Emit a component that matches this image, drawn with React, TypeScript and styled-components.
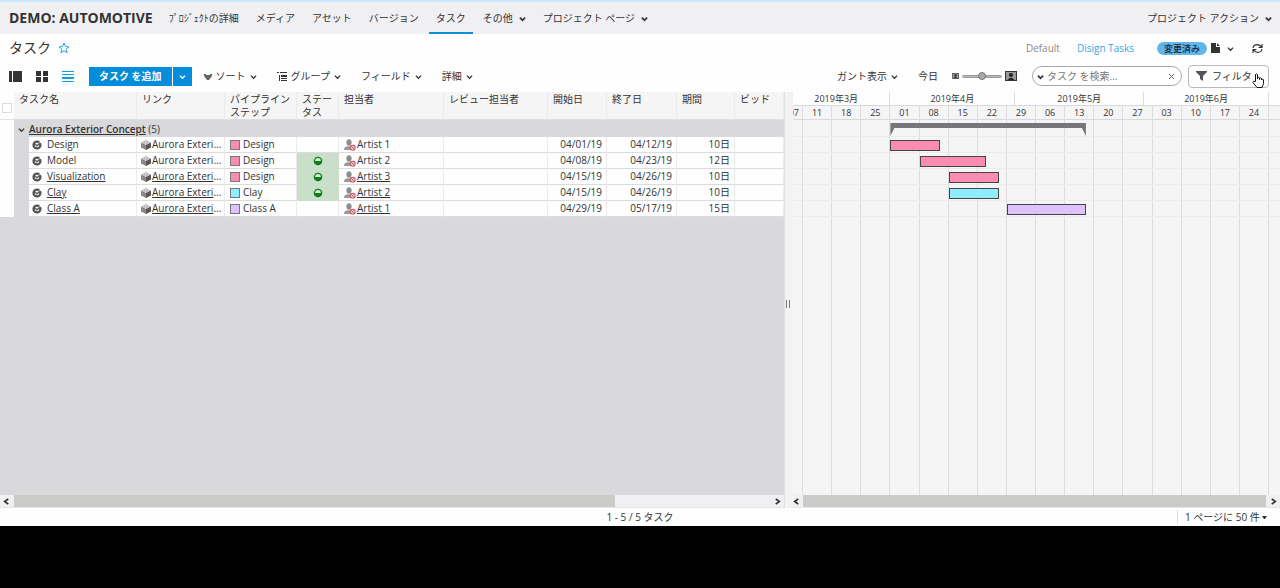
import React from "react";
import styled, { createGlobalStyle } from "styled-components";

const GlobalStyle = createGlobalStyle`
  *, *::before, *::after { box-sizing: border-box; }
  body {
    margin: 0;
    background: #000;
    color: #333;
    font: 10px/14px "Open Sans", "Noto Sans CJK JP", sans-serif;
  }
  button, input, select { font: inherit; color: inherit; }
  button { border: 0; padding: 0; background: none; cursor: pointer; white-space: nowrap; }
  a { color: inherit; text-decoration: none; }
`;

const Page = styled.div`
  display: flex;
  flex-direction: column;
  min-height: calc(100vh - 62px);
  background: #fefefe;
`;

const TopBar = styled.header`
  display: flex;
  align-items: center;
  height: 34px;
  padding: 0 8px 0 9px;
  border-top: 2px solid #c6e9fb;
  background: #f0f0f3;
`;

const ProjectName = styled.div`
  margin-right: 16px;
  font-size: 14px;
  font-weight: 700;
  white-space: nowrap;
`;

const Nav = styled.nav`
  display: flex;
  align-self: stretch;
  flex: 1;
  gap: 3px;
`;

const NavLink = styled.a<{ $active?: boolean }>`
  display: flex;
  align-items: center;
  gap: 6px;
  padding: 2px 7px 0;
  white-space: nowrap;
  border-bottom: 2px solid ${(p) => (p.$active ? "#0e8fd6" : "transparent")};
  &:first-child { padding-left: 0; }
`;

const TextButton = styled.button<{ $gap?: number }>`
  display: inline-flex;
  align-items: center;
  gap: ${(p) => p.$gap ?? 4}px;
`;

const TitleBar = styled.div`
  display: flex;
  align-items: center;
  height: 28px;
  padding: 0 17px 0 9px;
`;

const Title = styled.h1`
  margin: 0 6px 0 0;
  font-size: 14px;
  line-height: 20px;
  font-weight: 400;
`;

const Push = styled.div`
  flex: 1;
`;

const ViewLink = styled.a<{ $active?: boolean }>`
  margin-right: ${(p) => (p.$active ? 23 : 17)}px;
  color: ${(p) => (p.$active ? "#35a7df" : "#8a8a8a")};
`;

const Badge = styled.span`
  margin-right: 4px;
  padding: 0 7px;
  border-radius: 7px;
  background: #60b6e8;
  color: #1b2b38;
  font-weight: 500;
  font-size: 9px;
  line-height: 13px;
`;

const PageMenu = styled(TextButton)`
  margin-right: 18px;
`;

const Toolbar = styled.div`
  display: flex;
  align-items: center;
  height: 30px;
  padding: 0 11px 2px 9px;
`;

const ViewModes = styled.div`
  display: flex;
  gap: 14px;
  margin-right: 15px;
  button { display: flex; }
`;

const SplitButton = styled.div`
  display: flex;
  gap: 1px;
  margin-right: 12px;
`;

const Primary = styled.button`
  display: flex;
  align-items: center;
  justify-content: center;
  height: 19px;
  padding: 0 10px;
  background: #058cdb;
  color: #fff;
  font-weight: 700;
  &:last-child { padding: 0 6px; }
`;

const Menus = styled.div`
  display: flex;
  gap: 20px;
`;

const ToolbarEnd = styled.div`
  display: flex;
  align-items: center;
  margin-left: auto;
  gap: 6px;
`;

const GanttTools = styled.div`
  display: flex;
  align-items: center;
  gap: 20px;
  margin-right: 9px;
`;

const Zoom = styled.label`
  display: flex;
  align-items: center;
  gap: 3px;
  margin-left: -6px;
`;

const Range = styled.input`
  appearance: none;
  width: 40px;
  height: 10px;
  margin: 0;
  background: transparent;
  &::-webkit-slider-runnable-track {
    height: 3px;
    border: 1px solid #999;
    border-radius: 2px;
    background: #bbb;
  }
  &::-webkit-slider-thumb {
    appearance: none;
    width: 8px;
    height: 8px;
    margin-top: -4px;
    border: 1px solid #777;
    border-radius: 50%;
    background: #a9a9a9;
  }
`;

const Search = styled.div`
  display: flex;
  align-items: center;
  gap: 3px;
  width: 150px;
  height: 20px;
  padding: 0 7px 0 4px;
  border: 1px solid #a9a9a9;
  border-radius: 10px;
  background: #fff;
  input {
    flex: 1;
    min-width: 0;
    padding: 0;
    border: 0;
    outline: 0;
    background: none;
  }
  input::placeholder { color: #777; }
  button { display: flex; }
`;

const FilterButton = styled.button`
  position: relative;
  display: flex;
  align-items: center;
  gap: 5px;
  width: 81px;
  height: 23px;
  padding: 0 7px;
  border: 1px solid #b9b9b9;
  border-radius: 4px;
`;

const Pointer = styled.svg`
  position: absolute;
  left: 63px;
  top: 7px;
`;

const Workspace = styled.main`
  display: grid;
  grid-template-columns: minmax(0, 784fr) 9px minmax(0, 487fr);
  flex: 1;
`;

const Pane = styled.section<{ $bg: string }>`
  display: flex;
  flex-direction: column;
  overflow: hidden;
  background: ${(p) => p.$bg};
`;

const Splitter = styled.div`
  display: flex;
  align-items: center;
  justify-content: center;
  padding: 8px 2px 0 0;
  background: #f3f3f4;
  border-left: 1px solid #e0e0e2;
  &::before {
    content: "";
    width: 4px;
    height: 8px;
    border: 1px solid #777;
    border-width: 0 1px;
  }
`;

const TaskTable = styled.table`
  width: 100%;
  table-layout: fixed;
  border-spacing: 0;
`;

const HeadCell = styled.th`
  height: 28px;
  padding: 1px 0 0 5px;
  border-right: 1px solid #ebebee;
  border-bottom: 1px solid #dededf;
  background: #f5f5f5;
  line-height: 13px;
  font-weight: 400;
  text-align: left;
  vertical-align: top;
  overflow: hidden;
`;

const CheckCell = styled.td`
  padding: 4px 0 0 2px;
  background: #fefefe;
  border-bottom: 1px solid #e2e2e2;
`;

const CheckBox = styled.input`
  appearance: none;
  display: block;
  width: 10px;
  height: 10px;
  margin: 0;
  border: 1px solid #dcdcdc;
  background: #fff;
`;

const Gutter = styled.td<{ $blank?: boolean }>`
  padding: 0;
  background: ${(p) => (p.$blank ? "#fefefe" : "#d9d9db")};
`;

const GroupCell = styled.td`
  height: 17px;
  padding: 0 0 0 4px;
  background: #d9d9db;
  line-height: 16px;
  button { margin-right: 4px; }
  a { font-weight: 600; text-decoration: underline; }
`;

const Cell = styled.td<{ $right?: boolean; $tint?: boolean }>`
  height: 16px;
  padding: 0 4px 0 5px;
  background: ${(p) => (p.$tint ? "#c9dfca" : "#fefefe")};
  border-right: 1px solid ${(p) => (p.$tint ? "#c9dfca" : "#ececee")};
  border-bottom: 1px solid ${(p) => (p.$tint ? "#c9dfca" : "#dcdcdd")};
  line-height: 15px;
  text-align: ${(p) => (p.$right ? "right" : "left")};
  white-space: nowrap;
`;

const NameCell = styled(Cell)`
  padding-left: 3px;
`;

const LinkCell = styled(Cell)`
  padding: 0 2px 0 4px;
`;

const CellLine = styled.div<{ $gap?: number; $center?: boolean }>`
  display: flex;
  align-items: center;
  justify-content: ${(p) => (p.$center ? "center" : "flex-start")};
  gap: ${(p) => p.$gap ?? 1}px;
  height: 15px;
  svg { flex: none; }
`;

const ItemLink = styled.a<{ $underline?: boolean }>`
  text-decoration: ${(p) => (p.$underline ? "underline" : "none")};
`;

const Swatch = styled.span<{ $color: string }>`
  width: 10px;
  height: 10px;
  border: 1px solid #777;
  background: ${(p) => p.$color};
`;

const ScrollBar = styled.div<{ $arrow: number }>`
  display: flex;
  align-items: stretch;
  height: 13px;
  margin-top: auto;
  background: #f0f0f3;
  border-bottom: 1px solid #e6e6e9;
  button {
    display: flex;
    flex: none;
    align-items: center;
    justify-content: center;
    width: 14px;
  }
  button:first-child {
    justify-content: flex-start;
    width: ${(p) => p.$arrow}px;
    padding-left: ${(p) => (p.$arrow > 10 ? 3 : 0)}px;
  }
`;

const Track = styled.div<{ $size: number }>`
  flex: 1;
  &::before {
    content: "";
    display: block;
    width: ${(p) => p.$size}%;
    height: 100%;
    background: #cbcbca;
  }
`;

const Timeline = styled.div`
  position: relative;
  display: flex;
  flex: 1;
  flex-direction: column;
`;

const DAY_COLUMNS = "10px repeat(112, minmax(0, 1fr)) 11px";

const MonthRow = styled.div`
  display: grid;
  grid-template-columns: ${DAY_COLUMNS};
  height: 14px;
  border-bottom: 1px solid #d9d9dc;
  background: #fefefe;
`;

const Month = styled.div<{ $from: number; $to: number }>`
  grid-column: ${(p) => p.$from} / ${(p) => p.$to};
  overflow: hidden;
  border-right: 1px solid #dcdce0;
  font-size: 9px;
  line-height: 13px;
  text-align: center;
  &:first-child { padding-right: 10px; }
`;

const WeekGrid = styled.div`
  display: grid;
  flex: 1;
  grid-template-columns: 10px repeat(16, minmax(0, 1fr)) 11px;
`;

const Week = styled.div`
  display: flex;
  flex-direction: column;
  overflow: hidden;
  border-right: 1px solid #dcdce0;
  font-size: 9px;
  line-height: 13px;
  text-align: center;
  &:last-child { border-right: 0; }
  span {
    height: 14px;
    border-bottom: 1px solid #d9d9dc;
  }
  &:first-child span { direction: rtl; padding-right: 3px; }
`;

const Bars = styled.div`
  position: absolute;
  top: 28px;
  left: 0;
  right: 0;
  display: grid;
  grid-template-columns: ${DAY_COLUMNS};
  grid-template-rows: 17px repeat(5, 16px);
`;

const RowLine = styled.div<{ $row: number }>`
  grid-row: ${(p) => p.$row};
  grid-column: 1 / -1;
  border-bottom: 1px solid #ebebee;
`;

const Bar = styled.div<{ $row: number; $start: number; $days: number; $color: string }>`
  grid-row: ${(p) => p.$row};
  grid-column: ${(p) => p.$start + 23} / span ${(p) => p.$days};
  height: 11px;
  margin-top: 3px;
  border: 1px solid #444;
  background: ${(p) => p.$color};
  z-index: 1;
`;

const Summary = styled.div`
  grid-row: 1;
  grid-column: 23 / span 47;
  height: 13px;
  margin-top: 3px;
  z-index: 1;
  background: #77777b;
  clip-path: polygon(0 0, 100% 0, 100% 13px, calc(100% - 4px) 5px, 4px 5px, 0 13px);
`;

const Footer = styled.footer`
  display: grid;
  grid-template-columns: 1fr auto 1fr;
  align-items: center;
  height: 18px;
`;

const PageSize = styled.label`
  display: flex;
  justify-self: end;
  align-items: center;
  gap: 2px;
  margin-right: 13px;
  padding-left: 7px;
  border-left: 1px solid #dcdce0;
  select {
    appearance: none;
    padding: 0;
    border: 0;
    background: none;
  }
`;

const Chevron = ({ width = 2, size = 7, color = "#333", dir = "down" }: { width?: number; size?: number; color?: string; dir?: "down" | "left" | "right" }) => {
  const d = { down: "M1 3 L4 6 L7 3", left: "M6 1 L2 4 L6 7", right: "M2 1 L6 4 L2 7" }[dir];
  return (
    <svg width={size} height={size} viewBox="0 0 8 8" fill="none" stroke={color} strokeWidth={width} aria-hidden>
      <path d={d} />
    </svg>
  );
};

const Star = () => (
  <svg width="14" height="14" viewBox="0 0 14 14" fill="none" stroke="#2ba3df" strokeWidth="1" aria-hidden>
    <path d="M7 2 L8.4 5.5 L12 5.8 L9.2 8.1 L10.2 11.8 L7 9.8 L3.8 11.8 L4.8 8.1 L2 5.800 L5.6 5.5 Z" />
  </svg>
);

const SideIcon = () => (
  <svg width="13" height="11" viewBox="0 0 13 11" fill="#333" aria-hidden>
    <path d="M0 0h3v11H0zM4 0h9v11H4z" />
  </svg>
);

const GridIcon = () => (
  <svg width="12" height="11" viewBox="0 0 12 11" fill="#333" aria-hidden>
    <path d="M0 0h5v5H0zM7 0h5v5H7zM0 6h5v5H0zM7 6h5v5H7z" />
  </svg>
);

const ListIcon = () => (
  <svg width="12" height="11" viewBox="0 0 12 11" fill="#129be0" aria-hidden>
    <path d="M0 0h12v1H0zM0 3h12v1H0zM0 6h12v2H0zM0 10h12v1H0z" />
  </svg>
);

const SortIcon = () => (
  <svg width="8" height="7" viewBox="0 0 8 7" fill="#666" aria-hidden>
    <path d="M0 1h2v1h4V1h2v2L5 7H3L0 3z" />
  </svg>
);

const GroupIcon = () => (
  <svg width="10" height="9" viewBox="0 0 10 9" fill="#333" aria-hidden>
    <path d="M0 0h2v1H0zM3 0h7v1H3zM2 3h1v6H2zM4 3h6v2H4zM4 6h6v1H4zM4 8h6v1H4z" />
  </svg>
);

const PersonFrame = ({ w, h }: { w: number; h: number }) => (
  <svg width={w} height={h} viewBox="0 0 12 10" aria-hidden>
    <rect x="0.5" y="0.5" width="11" height="9" fill="#999" stroke="#333" />
    <circle cx="6" cy="4" r="2" fill="#222" />
    <path d="M2.5 9 Q6 4.5 9.5 9 Z" fill="#222" />
  </svg>
);

const FileIcon = () => (
  <svg width="9" height="10" viewBox="0 0 9 10" fill="#333" aria-hidden>
    <path d="M0 0h5v4h4v6H0z" />
    <path d="M6 0l3 3H6z" />
  </svg>
);

const RefreshIcon = () => (
  <svg width="11" height="11" viewBox="0 0 11 11" fill="none" stroke="#333" strokeWidth="1.2" aria-hidden>
    <path d="M1 5 Q1.5 1.7 5.2 1.6 Q7.8 1.6 9.2 3.8 M10 1v3.4H6.6M10 6 Q9.5 9.3 5.8 9.4 Q3.2 9.4 1.8 7.2 M1 10V6.6h3.4" />
  </svg>
);

const FunnelIcon = () => (
  <svg width="11" height="10" viewBox="0 0 11 10" fill="#555" aria-hidden>
    <path d="M0 0h11v1L7 5v5L4 8V5L0 1z" />
  </svg>
);

const HandPointer = () => (
  <Pointer width="13" height="15" viewBox="0 0 13 15" fill="#fff" stroke="#111" strokeWidth="1" aria-hidden>
    <path d="M3.5 8.5V1.5Q4.5 0 5.5 1.5V6V4.5Q6.7 3.8 7.5 5V6.5V5Q8.7 4.4 9.5 5.5V7V6Q11 5.6 11.5 7V10.5L10 14.5H5L1 9.5Q.8 7.6 3.5 8.5Z" />
  </Pointer>
);

const TaskIcon = () => (
  <svg width="10" height="10" viewBox="0 0 10 10" fill="none" aria-hidden>
    <circle cx="5" cy="5" r="3.4" stroke="#555" strokeWidth="2.400" />
    <path d="M4 3.500 L5.500 5 L9.500 1" stroke="#fff" strokeWidth="1.200" />
    <path d="M3.200 4 L5 5.800 L8 3" stroke="#555" strokeWidth="1.200" />
  </svg>
);

const CubeIcon = () => (
  <svg width="10" height="11" viewBox="0 0 10 11" aria-hidden>
    <path d="M0 3.5l5-2.500 5 2.500-5 2.500z" fill="#c4c4c4" />
    <path d="M0 3.5l5 2.500v5L0 8.500z" fill="#888" />
    <path d="M10 3.5L5 6v5l5-2.500z" fill="#555" />
  </svg>
);

const UserIcon = () => (
  <svg width="12" height="12" viewBox="0 0 12 12" aria-hidden>
    <ellipse cx="5" cy="3.5" rx="2.6" ry="3.3" fill="#8c8f94" />
    <path d="M0 11Q0 7.5 3.5 7.2h3Q8 7.5 8 11z" fill="#9a9a9a" />
    <circle cx="8.8" cy="8.8" r="2.4" fill="#f7dada" stroke="#c8575b" strokeWidth="1.1" />
    <path d="M7.2 7.2l3.2 3.2" stroke="#c8575b" />
  </svg>
);

const StatusIcon = () => (
  <svg width="10" height="10" viewBox="0 0 10 10" aria-label="進行中" role="img">
    <circle cx="5" cy="5" r="3.6" fill="#d9eed9" stroke="#0f7d17" strokeWidth="1.4" />
    <path d="M1.4 5h7.2a3.6 3.6 0 0 1-7.2 0z" fill="#0f7d17" />
  </svg>
);

const PINK = "#fd8db0";
const CYAN = "#8fedfd";
const LILAC = "#dfc1fb";

const tasks = [
  { name: "Design", link: false, step: "Design", color: PINK, status: false, artist: "Artist 1", start: "04/01/19", end: "04/12/19", bid: "10日", from: 0, days: 12 },
  { name: "Model", link: false, step: "Design", color: PINK, status: true, artist: "Artist 2", start: "04/08/19", end: "04/23/19", bid: "12日", from: 7, days: 16 },
  { name: "Visualization", link: true, step: "Design", color: PINK, status: true, artist: "Artist 3", start: "04/15/19", end: "04/26/19", bid: "10日", from: 14, days: 12 },
  { name: "Clay", link: true, step: "Clay", color: CYAN, status: true, artist: "Artist 2", start: "04/15/19", end: "04/26/19", bid: "10日", from: 14, days: 12 },
  { name: "Class A", link: true, step: "Class A", color: LILAC, status: false, artist: "Artist 1", start: "04/29/19", end: "05/17/19", bid: "15日", from: 28, days: 19 },
];

const columnWidths = [14, 15, 108, 88, 72, 42, 105, 104, 59, 70, 58];
const headings = ["リンク", "パイプライン ステップ", "ステータス", "担当者", "レビュー担当者", "開始日", "終了日", "期間", "ビッド"];
const weeks = ["07", "11", "18", "25", "01", "08", "15", "22", "29", "06", "13", "20", "27", "03", "10", "17", "24", ""];
const months = [
  { label: "2019年3月", from: 1, to: 23 },
  { label: "2019年4月", from: 23, to: 53 },
  { label: "2019年5月", from: 53, to: 84 },
  { label: "2019年6月", from: 84, to: 114 },
];

export default function App() {
  return (
    <>
      <GlobalStyle />
      <Page>
        <TopBar>
          <ProjectName>DEMO: AUTOMOTIVE</ProjectName>
          <Nav>
            <NavLink href="#details">ﾌﾟﾛｼﾞｪｸﾄの詳細</NavLink>
            <NavLink href="#media">メディア</NavLink>
            <NavLink href="#assets">アセット</NavLink>
            <NavLink href="#versions">バージョン</NavLink>
            <NavLink href="#tasks" $active>タスク</NavLink>
            <NavLink href="#other">その他 <Chevron /></NavLink>
            <NavLink href="#pages">プロジェクト ページ <Chevron /></NavLink>
          </Nav>
          <TextButton $gap={6}>プロジェクト アクション <Chevron /></TextButton>
        </TopBar>

        <TitleBar>
          <Title>タスク</Title>
          <Star />
          <Push />
          <ViewLink href="#default">Default</ViewLink>
          <ViewLink href="#design" $active>Disign Tasks</ViewLink>
          <Badge>変更済み</Badge>
          <PageMenu $gap={7} aria-label="ページ メニュー"><FileIcon /><Chevron width={1.5} /></PageMenu>
          <TextButton aria-label="更新"><RefreshIcon /></TextButton>
        </TitleBar>

        <Toolbar>
          <ViewModes>
            <button aria-label="詳細表示"><SideIcon /></button>
            <button aria-label="サムネイル"><GridIcon /></button>
            <button aria-label="リスト"><ListIcon /></button>
          </ViewModes>
          <SplitButton>
            <Primary>タスク を追加</Primary>
            <Primary aria-label="追加オプション"><Chevron color="#fff" width={1.5} /></Primary>
          </SplitButton>
          <Menus>
            <TextButton><SortIcon />ソート<Chevron width={1.5} /></TextButton>
            <TextButton><GroupIcon />グループ<Chevron width={1.5} /></TextButton>
            <TextButton>フィールド<Chevron width={1.5} /></TextButton>
            <TextButton>詳細<Chevron width={1.5} /></TextButton>
          </Menus>
          <ToolbarEnd>
            <GanttTools>
              <TextButton>ガント表示<Chevron width={1.5} /></TextButton>
              <TextButton>今日</TextButton>
              <Zoom aria-label="ズーム">
                <PersonFrame w={7} h={6} />
                <Range type="range" defaultValue={50} />
                <PersonFrame w={12} h={10} />
              </Zoom>
            </GanttTools>
            <Search>
              <button aria-label="検索オプション"><Chevron /></button>
              <input aria-label="タスク を検索" placeholder="タスク を検索..." />
              <button aria-label="クリア">
                <svg width="5" height="5" viewBox="0 0 5 5" stroke="#666"><path d="M0 0l5 5M5 0L0 5" /></svg>
              </button>
            </Search>
            <FilterButton><FunnelIcon />フィルタ<HandPointer /></FilterButton>
          </ToolbarEnd>
        </Toolbar>

        <Workspace>
          <Pane $bg="#d9d9db">
            <TaskTable>
              <colgroup>
                {columnWidths.map((w, i) => <col key={i} width={w} />)}
                <col />
              </colgroup>
              <thead>
                <tr>
                  <CheckCell><CheckBox type="checkbox" aria-label="すべて選択" /></CheckCell>
                  <HeadCell colSpan={2}>タスク名</HeadCell>
                  {headings.map((h) => <HeadCell key={h}>{h}</HeadCell>)}
                </tr>
              </thead>
              <tbody>
                <tr>
                  <Gutter $blank />
                  <GroupCell colSpan={11}>
                    <button aria-label="折りたたむ"><Chevron width={1.5} /></button>
                    <a href="#aurora">Aurora Exterior Concept</a> (5)
                  </GroupCell>
                </tr>
                {tasks.map((t) => (
                  <tr key={t.name}>
                    <Gutter $blank />
                    <Gutter />
                    <NameCell><CellLine $gap={5}><TaskIcon /><ItemLink href="#task" $underline={t.link}>{t.name}</ItemLink></CellLine></NameCell>
                    <LinkCell><CellLine><CubeIcon /><span><ItemLink href="#aurora" $underline={t.link}>Aurora Exteri</ItemLink>...</span></CellLine></LinkCell>
                    <Cell><CellLine $gap={3}><Swatch $color={t.color} />{t.step}</CellLine></Cell>
                    <Cell $tint={t.status}>{t.status && <CellLine $center><StatusIcon /></CellLine>}</Cell>
                    <Cell><CellLine><UserIcon /><ItemLink href="#artist" $underline={t.link}>{t.artist}</ItemLink></CellLine></Cell>
                    <Cell />
                    <Cell $right>{t.start}</Cell>
                    <Cell $right>{t.end}</Cell>
                    <Cell $right>{t.bid}</Cell>
                    <Cell />
                  </tr>
                ))}
              </tbody>
            </TaskTable>
            <ScrollBar $arrow={14}>
              <button aria-label="左へ"><Chevron dir="left" /></button>
              <Track $size={79.5} />
              <button aria-label="右へ"><Chevron dir="right" /></button>
            </ScrollBar>
          </Pane>
          <Splitter />
          <Pane $bg="#f5f5f5">
            <Timeline>
              <MonthRow>
                {months.map((m) => <Month key={m.label} $from={m.from} $to={m.to}>{m.label}</Month>)}
              </MonthRow>
              <WeekGrid>
                {weeks.map((w, i) => <Week key={i}><span>{w}</span></Week>)}
              </WeekGrid>
              <Bars>
                {[1, 2, 3, 4, 5, 6].map((r) => <RowLine key={r} $row={r} />)}
                <Summary />
                {tasks.map((t, i) => <Bar key={t.name} $row={i + 2} $start={t.from} $days={t.days} $color={t.color} />)}
              </Bars>
            </Timeline>
            <ScrollBar $arrow={10}>
              <button aria-label="左へ"><Chevron dir="left" /></button>
              <Track $size={100} />
              <button aria-label="右へ"><Chevron dir="right" /></button>
            </ScrollBar>
          </Pane>
        </Workspace>

        <Footer>
          <span />
          <span>1 - 5 / 5 タスク</span>
          <PageSize>
            <select aria-label="ページあたりの件数"><option>1 ページに 50 件</option></select>
            <svg width="5" height="3" viewBox="0 0 5 3" fill="#333"><path d="M0 0h5L3 3H2z" /></svg>
          </PageSize>
        </Footer>
      </Page>
    </>
  );
}
